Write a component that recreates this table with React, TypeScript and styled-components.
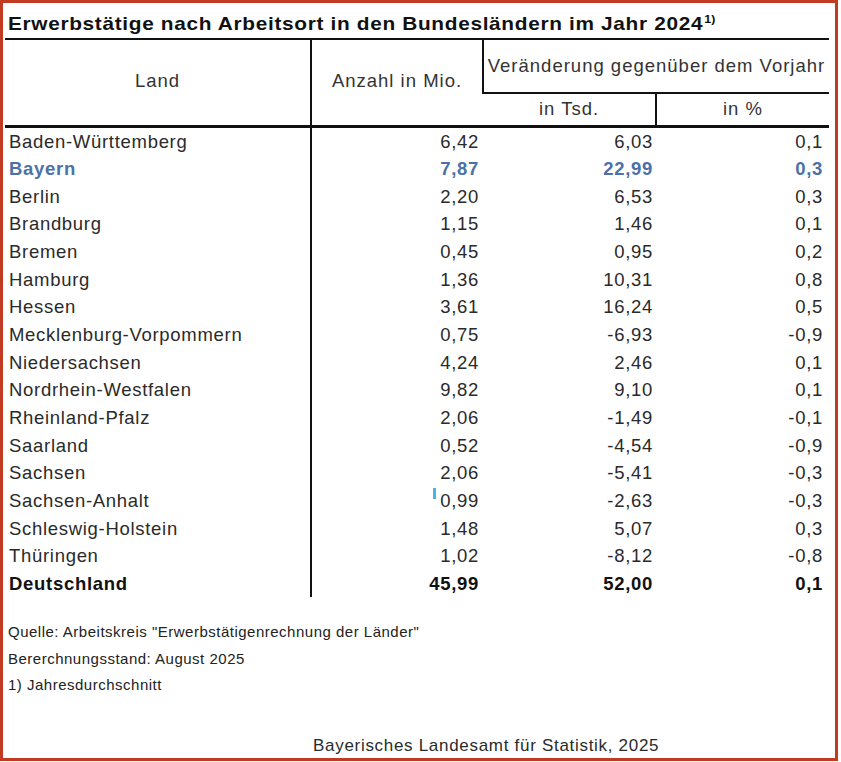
import React from "react";
import styled, { createGlobalStyle } from "styled-components";

const GlobalStyle = createGlobalStyle`
  html, body { margin: 0; padding: 0; background: #ffffff; }
  body { font-family: "Liberation Sans", Arial, sans-serif; color: #222; }
`;

const Frame = styled.div`
  box-sizing: border-box;
  width: 838px;
  height: 761px;
  border: 3px solid #c13a22;
  padding: 0 0 0 2px;
  display: flex;
  flex-direction: column;
`;

const TitleBar = styled.div`
  height: 35px;
  padding: 11px 0 0 3px;
  box-sizing: border-box;
`;

const Title = styled.h1`
  display: inline-block;
  margin: 0;
  font-size: 18.5px;
  line-height: 20px;
  font-weight: bold;
  letter-spacing: 0.6px;
  color: #111;
  white-space: nowrap;
  transform: scaleX(1.125);
  transform-origin: left center;
`;

const Sup = styled.sup`
  font-size: 11px;
  line-height: 0;
  letter-spacing: 0;
  vertical-align: 7px;
  margin-left: 1px;
`;

const Table = styled.table`
  border-collapse: collapse;
  width: 824px;
  table-layout: fixed;
  border-top: 2.5px solid #111;
`;

const HeadCell = styled.th<{ $w?: number; $h: number }>`
  ${(p) => (p.$w ? `width: ${p.$w}px;` : "")}
  height: ${(p) => p.$h}px;
  padding: 0;
  font-weight: normal;
  font-size: 18.5px;
  letter-spacing: 1px;
  color: #333;
  text-align: center;
  vertical-align: middle;
  border-left: 2px solid #111;
  border-bottom: 2px solid #111;
  &:first-child { border-left: none; }
`;

const SubHeadCell = styled(HeadCell)`
  border-bottom: 3px solid #111;
`;

const SpanHead = styled(HeadCell)`
  border-bottom: 3px solid #111;
  padding-bottom: 4px;
`;

const Row = styled.tr<{ $variant?: "blue" | "bold" }>`
  height: 27.5px;
  color: ${(p) => (p.$variant === "blue" ? "#4b71a8" : p.$variant === "bold" ? "#111" : "#2a2a2a")};
  font-weight: ${(p) => (p.$variant ? "bold" : "normal")};
`;

const LandCell = styled.td`
  padding: 2px 0 0 4px;
  font-size: 18.5px;
  letter-spacing: 0.7px;
  text-align: left;
  border-right: 2px solid #111;
  white-space: nowrap;
`;

const NumCell = styled.td<{ $pr: number }>`
  padding: 2px ${(p) => p.$pr}px 0 0;
  font-size: 18.5px;
  letter-spacing: 0.7px;
  text-align: right;
  white-space: nowrap;
`;

const Cursor = styled.span`
  position: relative;
  top: -8px;
  display: inline-block;
  width: 3px;
  height: 11px;
  background: #4ab4e6;
  vertical-align: baseline;
  margin-right: 4px;
`;

const Notes = styled.div`
  display: flex;
  flex-direction: column;
  gap: 8px;
  padding: 29px 0 0 3px;
  font-size: 15px;
  line-height: 18.5px;
  letter-spacing: 0.5px;
  color: #222;
`;

const Credit = styled.div`
  margin-top: auto;
  padding: 0 0 2px 308px;
  font-size: 17px;
  line-height: 20px;
  letter-spacing: 0.7px;
  color: #2a2a2a;
`;

type Datum = { land: string; a: string; t: string; p: string; v?: "blue" | "bold"; cursor?: boolean };

const data: Datum[] = [
  { land: "Baden-Württemberg", a: "6,42", t: "6,03", p: "0,1" },
  { land: "Bayern", a: "7,87", t: "22,99", p: "0,3", v: "blue" },
  { land: "Berlin", a: "2,20", t: "6,53", p: "0,3" },
  { land: "Brandburg", a: "1,15", t: "1,46", p: "0,1" },
  { land: "Bremen", a: "0,45", t: "0,95", p: "0,2" },
  { land: "Hamburg", a: "1,36", t: "10,31", p: "0,8" },
  { land: "Hessen", a: "3,61", t: "16,24", p: "0,5" },
  { land: "Mecklenburg-Vorpommern", a: "0,75", t: "-6,93", p: "-0,9" },
  { land: "Niedersachsen", a: "4,24", t: "2,46", p: "0,1" },
  { land: "Nordrhein-Westfalen", a: "9,82", t: "9,10", p: "0,1" },
  { land: "Rheinland-Pfalz", a: "2,06", t: "-1,49", p: "-0,1" },
  { land: "Saarland", a: "0,52", t: "-4,54", p: "-0,9" },
  { land: "Sachsen", a: "2,06", t: "-5,41", p: "-0,3" },
  { land: "Sachsen-Anhalt", a: "0,99", t: "-2,63", p: "-0,3", cursor: true },
  { land: "Schleswig-Holstein", a: "1,48", t: "5,07", p: "0,3" },
  { land: "Thüringen", a: "1,02", t: "-8,12", p: "-0,8" },
  { land: "Deutschland", a: "45,99", t: "52,00", p: "0,1", v: "bold" },
];

export default function App() {
  return (
    <>
      <GlobalStyle />
      <Frame>
        <TitleBar>
          <Title>
            Erwerbstätige nach Arbeitsort in den Bundesländern im Jahr 2024<Sup>1)</Sup>
          </Title>
        </TitleBar>
        <Table>
          <thead>
            <tr>
              <SpanHead $w={305} $h={81} rowSpan={2}>Land</SpanHead>
              <SpanHead $w={170} $h={81} rowSpan={2}>Anzahl in Mio.</SpanHead>
              <HeadCell $h={50} colSpan={2}>Veränderung gegenüber dem Vorjahr</HeadCell>
            </tr>
            <tr>
              <SubHeadCell $w={172} $h={30}>in Tsd.</SubHeadCell>
              <SubHeadCell $w={177} $h={30}>in %</SubHeadCell>
            </tr>
          </thead>
          <tbody>
            {data.map((d) => (
              <Row key={d.land} $variant={d.v}>
                <LandCell>{d.land}</LandCell>
                <NumCell $pr={4}>
                  {d.cursor && <Cursor />}
                  {d.a}
                </NumCell>
                <NumCell $pr={3}>{d.t}</NumCell>
                <NumCell $pr={6}>{d.p}</NumCell>
              </Row>
            ))}
          </tbody>
        </Table>
        <Notes>
          <div>Quelle: Arbeitskreis "Erwerbstätigenrechnung der Länder"</div>
          <div>Bererchnungsstand: August 2025</div>
          <div>1) Jahresdurchschnitt</div>
        </Notes>
        <Credit>Bayerisches Landesamt für Statistik, 2025</Credit>
      </Frame>
    </>
  );
}
